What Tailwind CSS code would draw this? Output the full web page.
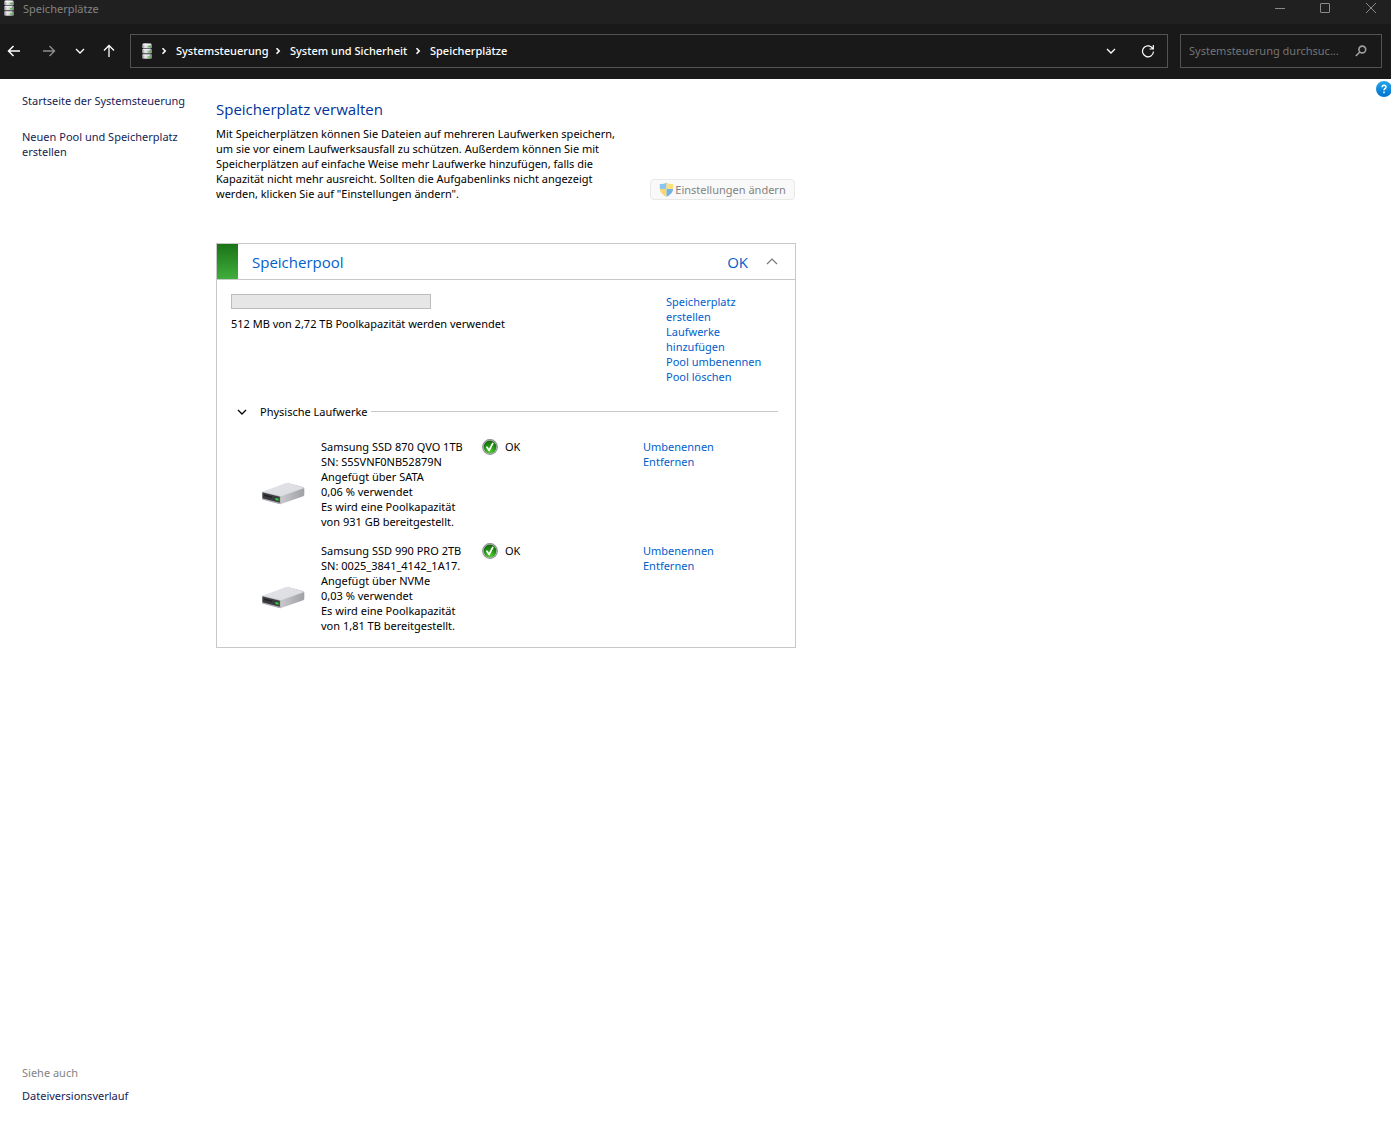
<!DOCTYPE html>
<html lang="de">
<head>
<meta charset="utf-8">
<meta name="viewport" content="width=device-width, initial-scale=1">
<title>Speicherplätze</title>
<script src="https://cdn.jsdelivr.net/npm/@tailwindcss/browser@4"></script>
</head>
<body class="relative flex min-h-screen flex-col bg-white font-['Noto_Sans','Open_Sans',sans-serif] text-[11px] leading-[15px] text-black">

<!-- Shared symbols -->
<svg class="absolute size-0" aria-hidden="true">
  <defs>
    <linearGradient id="metal" x1="0" x2="1"><stop offset="0" stop-color="#77777f"/><stop offset=".3" stop-color="#e8e8ec"/><stop offset=".65" stop-color="#c5c5cc"/><stop offset="1" stop-color="#77777f"/></linearGradient>
    <linearGradient id="top" x1="0" y1="0" x2="1" y2="1"><stop offset="0" stop-color="#e4e5e8"/><stop offset="1" stop-color="#dadbdf"/></linearGradient>
    <linearGradient id="side" x1="0" x2="1"><stop offset="0" stop-color="#cbccd0"/><stop offset=".5" stop-color="#c4c5c8"/><stop offset="1" stop-color="#a0a1a5"/></linearGradient>
    <radialGradient id="green" cx=".5" cy=".85" r=".8"><stop offset="0" stop-color="#55cf32"/><stop offset=".6" stop-color="#229014"/><stop offset="1" stop-color="#166b10"/></radialGradient>
    <linearGradient id="help" x1="0" y1="0" x2="0" y2="1"><stop offset="0" stop-color="#25a5e8"/><stop offset="1" stop-color="#0072d0"/></linearGradient>
  </defs>
  <symbol id="stack" viewBox="0 0 12 16">
    <path d="M1 1.500 2 .300h8l1 1.200V5H1zM1 6h10v4.300H1zM1 11.300h10V15l-1 .800H2L1 15z" fill="url(#metal)"/>
    <path d="M2 5h8v1H2zM2 10.300h8v1H2z" fill="#6b6b75"/>
    <path d="M2 1h8v1.200H2zM2 6.300h7v1H2zM2 11.600h7v1H2z" fill="#fff" opacity=".7"/>
    <path d="M7 3h2.500v1H7zM7 8.300h2.500v1H7zM7 13.400h2.500v1H7z" fill="#3fc41e"/>
  </symbol>
  <symbol id="drive" viewBox="0 0 44 24">
    <path d="M1 10.500 25 1.200q1-.4 2-.1L42 5q1.300.4 1.300 1.500v6.300q0 1-1 1.400L20 22q-1 .4-2 .1L2 17.600q-1-.3-1-1.300z" fill="url(#side)"/>
    <path d="M1.200 9.700 24.800 1.200q1.200-.4 2.400-.1L42.500 5.200q.8.400.2 1L20 14.200q-1 .3-2 0z" fill="url(#top)"/>
    <path d="m1 9.700 18.500 4.600v7.900L2 17.700q-1-.3-1-1.300z" fill="#aeb0b3"/>
    <path d="m1.500 10.500 17.300 4.300v6L2.200 16.600q-.7-.2-.7-.9z" fill="#3a3c3f"/>
    <path d="m3 12.600 8 2v1.500l-8-2z" fill="#222426"/>
    <path d="m14.500 16 3 .7v2l-3-.7z" fill="#22e22c"/>
  </symbol>
  <symbol id="ok" viewBox="0 0 16 16">
    <circle cx="8" cy="8" r="7.900" fill="#85898d"/>
    <circle cx="8" cy="8" r="7" fill="#c3c6c8"/>
    <circle cx="8" cy="8" r="6.400" fill="url(#green)"/>
    <path d="m4.900 8.200 2.200 3.200 3.700-7" fill="none" stroke="#fff" stroke-width="1.700" stroke-linecap="round" stroke-linejoin="round"/>
  </symbol>
  <symbol id="crumb" viewBox="0 0 6 8"><path d="m1.500 1.200 2.700 2.800-2.700 2.800" fill="none" stroke="currentColor" stroke-width="1.600"/></symbol>
  <symbol id="down" viewBox="0 0 10 10"><path d="m1 3 4 4 4-4" fill="none" stroke="currentColor" stroke-width="1.300"/></symbol>
</svg>

<header>
  <div class="flex h-6 items-start justify-between bg-[#202020] pl-[3px] text-[#838383]">
    <div class="flex items-start gap-2">
      <svg class="h-4 w-3"><use href="#stack"/></svg>
      <span class="leading-[18px]">Speicherplätze</span>
    </div>
    <div class="flex">
      <button class="flex h-4 w-[38px] items-center justify-center" aria-label="Minimieren"><svg class="size-3" viewBox="0 0 12 12" fill="none" stroke="#8a8a8a"><path d="M1 6.500h10"/></svg></button>
      <button class="flex h-4 w-[52px] items-center justify-center" aria-label="Maximieren"><svg class="size-3" viewBox="0 0 12 12" fill="none" stroke="#8a8a8a"><rect x="1.500" y="1.500" width="9" height="9" rx=".5"/></svg></button>
      <button class="flex h-4 w-10 items-center justify-center" aria-label="Schließen"><svg class="size-3" viewBox="0 0 12 12" fill="none" stroke="#8a8a8a"><path d="m1 1 10 10M11 1 1 11"/></svg></button>
    </div>
  </div>

  <div class="flex h-[55px] items-center bg-[#191919] pr-[9px] pb-[2px] text-white">
    <nav class="flex w-[130px] shrink-0 items-center" aria-label="Verlauf">
      <button class="flex h-8 w-7 items-center justify-center" aria-label="Zurück"><svg class="h-3 w-[14px]" viewBox="0 0 14 12" fill="none" stroke="#fff" stroke-width="1.500"><path d="M13 6H1.500M6.500 1l-5 5 5 5"/></svg></button>
      <button class="ml-[5px] flex h-8 w-8 items-center justify-center" aria-label="Vorwärts"><svg class="h-3 w-[14px]" viewBox="0 0 14 12" fill="none" stroke="#8d8d8d" stroke-width="1.400"><path d="M1 6h11.500M7.500 1l5 5-5 5"/></svg></button>
      <button class="flex h-8 w-[30px] items-center justify-center" aria-label="Zuletzt besucht"><svg class="size-[10px]"><use href="#down"/></svg></button>
      <button class="flex h-8 w-7 items-center justify-center" aria-label="Nach oben"><svg class="h-[14px] w-3" viewBox="0 0 12 14" fill="none" stroke="#fff" stroke-width="1.300"><path d="M6 13V1.500M1 6.500l5-5 5 5"/></svg></button>
    </nav>
    <nav class="flex h-[34px] flex-1 items-center border border-[#535353] pl-[10px]" aria-label="Adresse">
      <svg class="h-4 w-3"><use href="#stack"/></svg>
      <svg class="mx-2 h-2 w-[6px]"><use href="#crumb"/></svg>
      <a href="#" class="w-[92px] pl-px font-medium whitespace-nowrap">Systemsteuerung</a>
      <svg class="mx-2 h-2 w-[6px]"><use href="#crumb"/></svg>
      <a href="#" class="w-[118px] pl-px font-medium whitespace-nowrap">System und Sicherheit</a>
      <svg class="mx-2 h-2 w-[6px]"><use href="#crumb"/></svg>
      <a href="#" class="pl-px font-medium">Speicherplätze</a>
      <button class="ml-auto flex h-8 w-8 items-center justify-center" aria-label="Vorherige Orte"><svg class="size-[10px]"><use href="#down"/></svg></button>
      <button class="mr-[3px] ml-[5px] flex h-8 w-8 items-center justify-center" aria-label="Aktualisieren"><svg class="size-[14px]" viewBox="0 0 14 14" fill="none" stroke="#fff" stroke-width="1.200"><path d="M12 5A5.500 5.500 0 1 0 12.500 7.500M12.300 1v4H8.500"/></svg></button>
    </nav>
    <form class="ml-3 flex h-[34px] w-[202px] shrink-0 items-center border border-[#535353] pl-2" role="search">
      <input type="text" aria-label="Systemsteuerung durchsuchen" placeholder="Systemsteuerung durchsuc..." class="w-[158px] bg-transparent outline-none placeholder:text-[#757575]">
      <button class="ml-[2px] flex h-8 w-6 items-center justify-center" aria-label="Suchen"><svg class="size-3" viewBox="0 0 12 12" fill="none" stroke="#a0a0a0" stroke-width="1.600"><circle cx="7.300" cy="4.500" r="3.400"/><path d="M4.800 7 .8 11"/></svg></button>
    </form>
  </div>
</header>

<div class="relative flex flex-1">
  <a href="#" class="absolute top-[2px] right-0 h-4 w-[15px] overflow-hidden" aria-label="Hilfe">
    <svg class="size-4 max-w-none" viewBox="0 0 16 16"><circle cx="8" cy="8" r="8" fill="url(#help)"/><path d="M6.200 6.200q0-1.900 1.900-1.900T10 6q0 1-1 1.600T8 9.200M8 10.600v1.600" fill="none" stroke="#fff" stroke-width="1.500"/></svg>
  </a>

  <aside class="flex w-[216px] shrink-0 flex-col justify-between pt-[14px] pr-6 pb-[18px] pl-[22px] text-[#151c55]">
    <nav class="flex flex-col gap-[21px]">
      <a href="#" class="whitespace-nowrap">Startseite der Systemsteuerung</a>
      <a href="#">Neuen Pool und Speicherplatz erstellen</a>
    </nav>
    <nav class="flex flex-col gap-2">
      <span class="text-[#838383]">Siehe auch</span>
      <a href="#">Dateiversionsverlauf</a>
    </nav>
  </aside>

  <main class="w-[580px] pt-[19px]">
    <h1 class="font-['Open_Sans','Noto_Sans',sans-serif] text-[15px] leading-[22px] text-[#003399]">Speicherplatz verwalten</h1>
    <div class="mt-[6px] flex items-end justify-between">
      <p class="w-[410px] whitespace-nowrap">Mit Speicherplätzen können Sie Dateien auf mehreren Laufwerken speichern,<br>um sie vor einem Laufwerksausfall zu schützen. Außerdem können Sie mit<br>Speicherplätzen auf einfache Weise mehr Laufwerke hinzufügen, falls die<br>Kapazität nicht mehr ausreicht. Sollten die Aufgabenlinks nicht angezeigt<br>werden, klicken Sie auf "Einstellungen ändern".</p>
      <button disabled class="mr-px mb-px flex h-[21px] w-[145px] items-center justify-center gap-px rounded border border-[#e8e8e8] bg-[#f9f9f9] whitespace-nowrap text-[#838383]">
        <svg class="size-[15px] shrink-0" viewBox="0 0 15 15"><path d="M7.500.5Q5 2.300.8 2v5H7.500z" fill="#8ac4ef"/><path d="M7.500.5Q10 2.300 14.200 2v5H7.500z" fill="#fce07b"/><path d="M.8 7q.4 5 6.700 7.700V7z" fill="#fbd76f"/><path d="M14.200 7q-.4 5-6.700 7.700V7z" fill="#72b2e6"/></svg>
        Einstellungen ändern
      </button>
    </div>

    <section class="mt-[42px] border border-[#c8c8c8]">
      <header class="flex h-9 items-center border-b border-[#c8c8c8] font-['Open_Sans','Noto_Sans',sans-serif] text-[15px] text-[#0060cc]">
        <div class="w-[21px] self-stretch bg-linear-to-b from-[#197417] to-[#40ae3c]"></div>
        <h2 class="ml-[14px] flex-1 leading-[22px]">Speicherpool</h2>
        <span class="leading-[22px]">OK</span>
        <button class="mr-4 ml-[17px] flex size-[14px] items-center justify-center" aria-label="Einklappen"><svg class="size-3" viewBox="0 0 12 12" fill="none" stroke="#777" stroke-width="1.200"><path d="m1 8 5-5 5 5"/></svg></button>
      </header>

      <div class="flex justify-between pt-[14px] pr-[29px] pl-[14px]">
        <div>
          <div role="progressbar" aria-label="Poolkapazität" aria-valuenow="0" class="h-[15px] w-[200px] border border-[#bcbcbc] bg-[#e6e6e6]"></div>
          <p class="mt-[7px]">512 MB von 2,72 TB Poolkapazität werden verwendet</p>
        </div>
        <nav class="flex w-[100px] flex-col text-[#0060cc]">
          <a href="#">Speicherplatz<br>erstellen</a>
          <a href="#">Laufwerke<br>hinzufügen</a>
          <a href="#" class="whitespace-nowrap">Pool umbenennen</a>
          <a href="#">Pool löschen</a>
        </nav>
      </div>

      <div class="mt-5 flex items-center gap-[3px] pr-[17px] pl-5">
        <button class="flex items-center gap-[13px]" aria-expanded="true"><svg class="size-[10px]"><use href="#down"/></svg>Physische Laufwerke</button>
        <div class="h-px flex-1 bg-[#c8c8c8]"></div>
      </div>

      <ul class="mt-5 mb-[14px] flex flex-col gap-[14px] pl-11">
        <li class="grid grid-cols-[60px_161px_161px_auto]">
          <svg class="mt-5 h-6 w-11 self-center"><use href="#drive"/></svg>
          <p class="whitespace-nowrap">Samsung SSD 870 QVO 1TB<br>SN: S5SVNF0NB52879N<br>Angefügt über SATA<br>0,06 % verwendet<br>Es wird eine Poolkapazität<br>von 931 GB bereitgestellt.</p>
          <div class="flex items-start gap-[7px]"><svg class="size-4"><use href="#ok"/></svg>OK</div>
          <nav class="flex flex-col text-[#0060cc]"><a href="#">Umbenennen</a><a href="#">Entfernen</a></nav>
        </li>
        <li class="grid grid-cols-[60px_161px_161px_auto]">
          <svg class="mt-5 h-6 w-11 self-center"><use href="#drive"/></svg>
          <p class="whitespace-nowrap">Samsung SSD 990 PRO 2TB<br>SN: 0025_3841_4142_1A17.<br>Angefügt über NVMe<br>0,03 % verwendet<br>Es wird eine Poolkapazität<br>von 1,81 TB bereitgestellt.</p>
          <div class="flex items-start gap-[7px]"><svg class="size-4"><use href="#ok"/></svg>OK</div>
          <nav class="flex flex-col text-[#0060cc]"><a href="#">Umbenennen</a><a href="#">Entfernen</a></nav>
        </li>
      </ul>
    </section>
  </main>
</div>
</body>
</html>
